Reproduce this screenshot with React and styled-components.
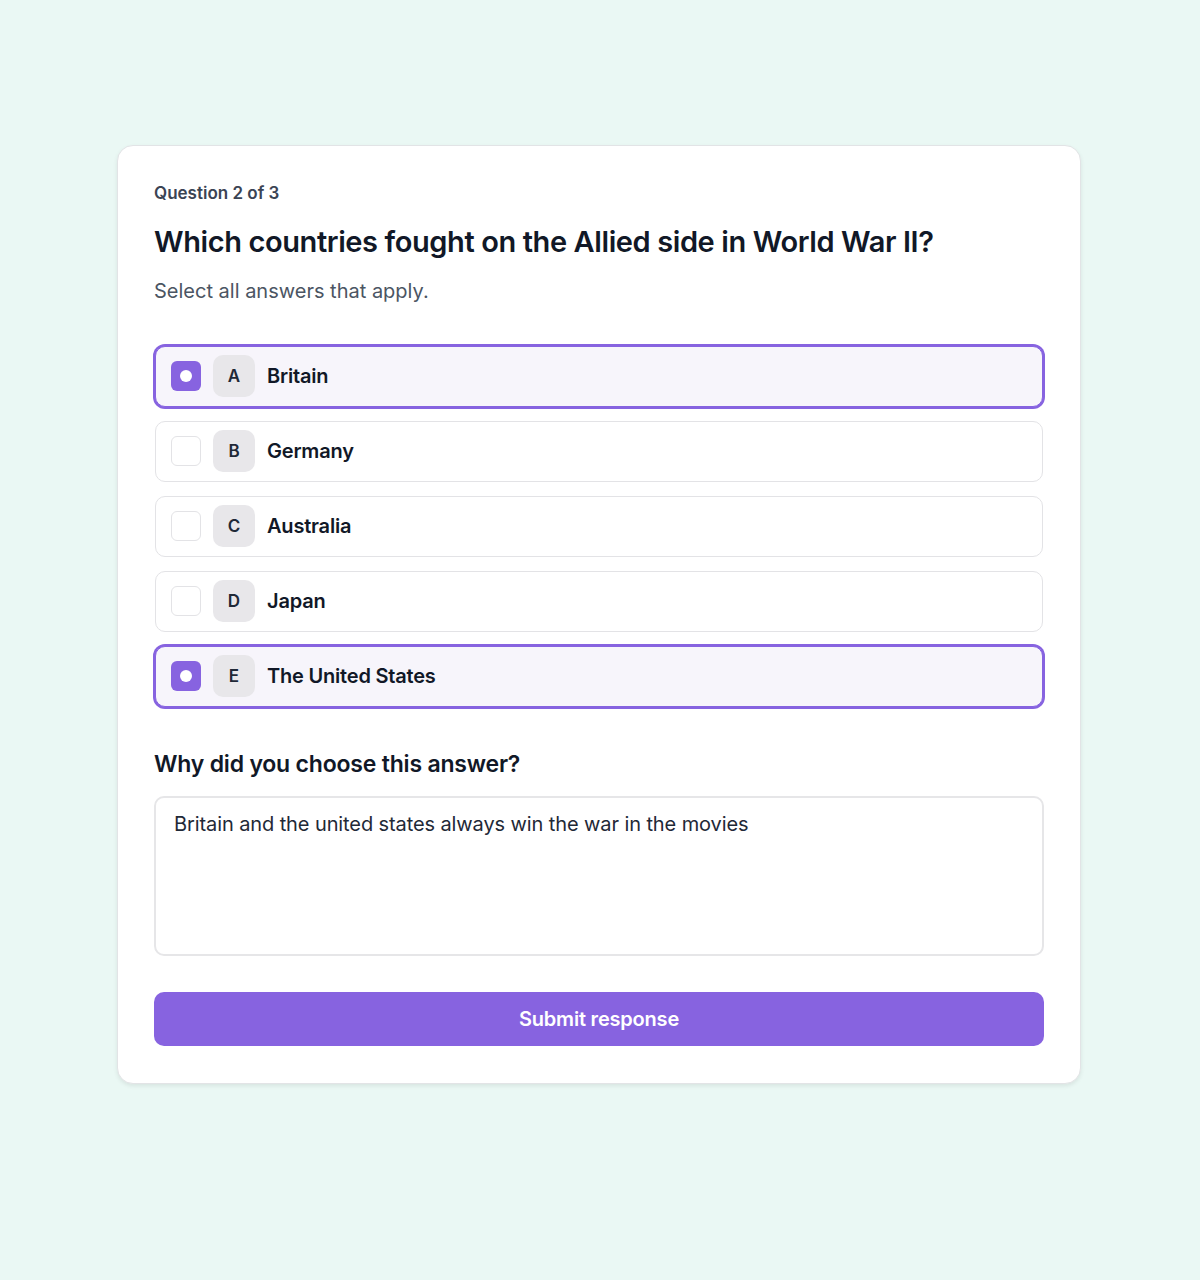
import React, { useState } from "react";
import styled, { createGlobalStyle } from "styled-components";

const GlobalStyle = createGlobalStyle`
  html, body {
    margin: 0;
    padding: 0;
    background: #eaf8f4;
    font-family: Inter, "Noto Sans", sans-serif;
  }
`;

const Page = styled.div`
  min-height: 1280px;
  padding: 145px 2px 0 0;
  box-sizing: border-box;
`;

const Card = styled.div`
  width: 964px;
  margin: 0 auto;
  box-sizing: border-box;
  background: #fff;
  border: 1px solid #e2e4e6;
  border-radius: 16px;
  box-shadow: 0 2px 4px rgba(0, 0, 0, 0.08);
  padding: 36px 36px 37px 36px;
  display: flex;
  flex-direction: column;
`;

const Counter = styled.div`
  font-size: 17px;
  font-weight: 600;
  color: #3b4454;
  line-height: 22px;
`;

const Title = styled.h1`
  margin: 19px 0 0;
  font-size: 29px;
  line-height: 38px;
  font-weight: 600;
  color: #111827;
  letter-spacing: -0.4px;
`;

const Hint = styled.p`
  margin: 17px 0 0;
  font-size: 20px;
  line-height: 26px;
  color: #4b5563;
`;

const Options = styled.div`
  margin-top: 42px;
  display: flex;
  flex-direction: column;
  gap: 14px;
`;

const Option = styled.button`
  all: unset;
  box-sizing: border-box;
  display: flex;
  align-items: center;
  gap: 12px;
  height: 61px;
  margin: 0 1px;
  padding: 0 15px 2px;
  border-radius: 10px;
  cursor: pointer;
  font-family: inherit;
  border: 1px solid ${(p) => (p.$on ? "#8763e0" : "#e3e3e6")};
  background: ${(p) => (p.$on ? "#f7f5fb" : "#fff")};
  box-shadow: ${(p) => (p.$on ? "0 0 0 2px #8763e0" : "none")};
`;

const Check = styled.span`
  width: 30px;
  height: 30px;
  box-sizing: border-box;
  border-radius: 6px;
  display: flex;
  align-items: center;
  justify-content: center;
  background: ${(p) => (p.$on ? "#8763e0" : "#fff")};
  border: ${(p) => (p.$on ? "none" : "1px solid #e3e3e6")};
  &::after {
    content: "";
    display: ${(p) => (p.$on ? "block" : "none")};
    width: 12px;
    height: 12px;
    border-radius: 50%;
    background: #fff;
  }
`;

const Letter = styled.span`
  width: 42px;
  height: 42px;
  border-radius: 10px;
  background: #e8e7ea;
  display: flex;
  align-items: center;
  justify-content: center;
  font-size: 17px;
  font-weight: 600;
  color: #1f2937;
`;

const Label = styled.span`
  font-size: 20px;
  font-weight: 600;
  color: #111827;
  letter-spacing: -0.2px;
`;

const WhyLabel = styled.label`
  margin-top: 42px;
  font-size: 23px;
  line-height: 30px;
  font-weight: 600;
  color: #111827;
  letter-spacing: -0.2px;
`;

const Reason = styled.textarea`
  margin-top: 17px;
  height: 160px;
  box-sizing: border-box;
  resize: none;
  border: 2px solid #e6e6e8;
  border-radius: 10px;
  padding: 13px 18px;
  font-family: inherit;
  font-size: 20px;
  line-height: 26px;
  color: #1f2937;
  letter-spacing: -0.1px;
  outline: none;
`;

const Submit = styled.button`
  margin-top: 36px;
  height: 54px;
  border: none;
  border-radius: 10px;
  background: #8763e0;
  color: #fff;
  font-family: inherit;
  font-size: 20px;
  font-weight: 600;
  cursor: pointer;
  letter-spacing: -0.2px;
`;

const answers = [
  { key: "A", text: "Britain" },
  { key: "B", text: "Germany" },
  { key: "C", text: "Australia" },
  { key: "D", text: "Japan" },
  { key: "E", text: "The United States" },
];

export default function App() {
  const [picked, setPicked] = useState(["A", "E"]);
  const [reason, setReason] = useState(
    "Britain and the united states always win the war in the movies"
  );

  const toggle = (k) => {
    setPicked((cur) =>
      cur.includes(k) ? cur.filter((x) => x !== k) : [...cur, k]
    );
  };

  return (
    <Page>
      <GlobalStyle />
      <Card>
        <Counter>Question 2 of 3</Counter>
        <Title>Which countries fought on the Allied side in World War II?</Title>
        <Hint>Select all answers that apply.</Hint>
        <Options>
          {answers.map((a) => {
            const on = picked.includes(a.key);
            return (
              <Option key={a.key} $on={on} onClick={() => toggle(a.key)}>
                <Check $on={on} />
                <Letter>{a.key}</Letter>
                <Label>{a.text}</Label>
              </Option>
            );
          })}
        </Options>
        <WhyLabel htmlFor="reason">Why did you choose this answer?</WhyLabel>
        <Reason
          id="reason"
          value={reason}
          onChange={(e) => setReason(e.target.value)}
        />
        <Submit>Submit response</Submit>
      </Card>
    </Page>
  );
}
